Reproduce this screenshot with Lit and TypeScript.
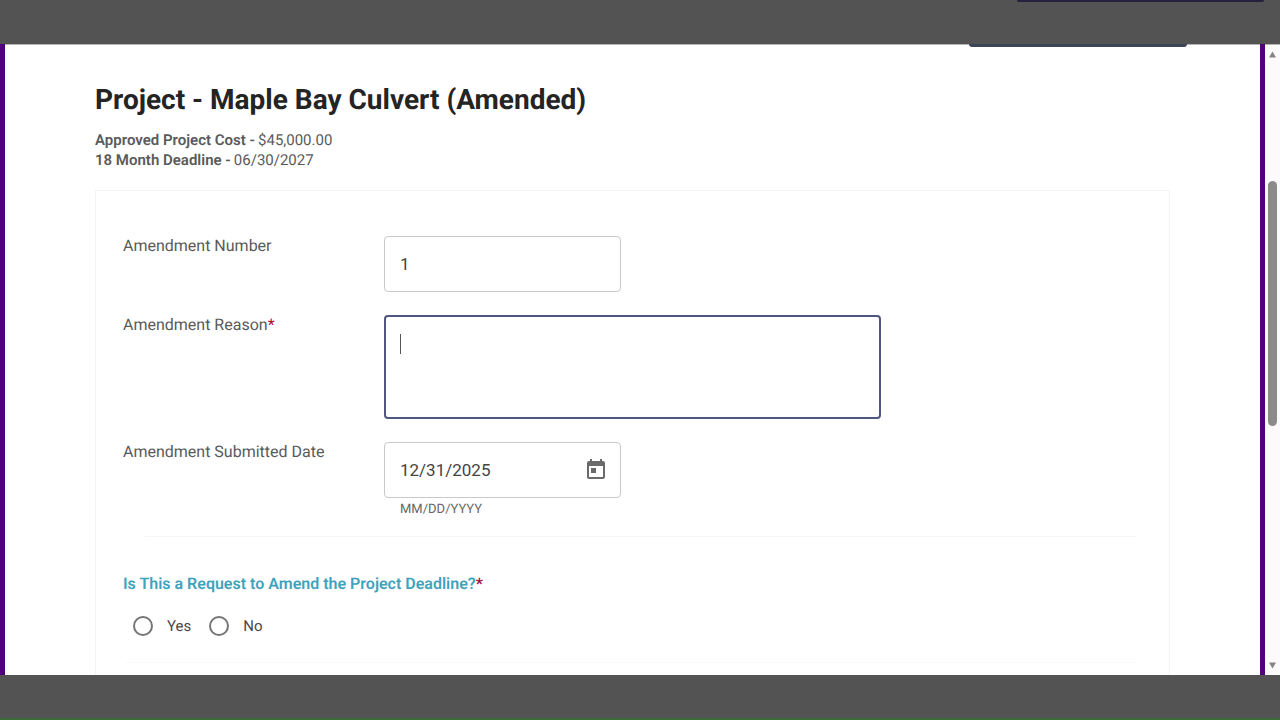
import { LitElement, html, css } from "lit";
import { customElement, state } from "lit/decorators.js";

@customElement("app-root")
export class AppRoot extends LitElement {
  @state() private reason = "";

  static styles = css`
    :host {
      display: flex;
      flex-direction: column;
      height: 100vh;
      overflow: hidden;
      font-family: Roboto, "Noto Sans", sans-serif;
      font-size: 16px;
      text-rendering: geometricPrecision;
      color: #5a5a5a;
      background: #fff;
    }
    * {
      box-sizing: border-box;
    }
    .top {
      flex: none;
      height: 44px;
      padding: 0 16px;
      display: flex;
      justify-content: flex-end;
      background: #535353;
    }
    .top-edge {
      width: 247px;
      height: 2px;
      border-radius: 0 0 2px 2px;
      background: #25213f;
    }
    .bottom {
      flex: none;
      height: 45px;
      background: #535353;
      border-bottom: 2px solid #3a6c35;
    }
    .middle {
      flex: 1;
      min-height: 0;
      display: flex;
    }
    .page {
      flex: 1;
      min-width: 0;
      overflow: hidden;
      border: 0 solid #50007c;
      border-width: 0 5px;
      box-shadow: inset 0 1px #b4b4b4;
      padding: 0 90px;
      display: flex;
      flex-direction: column;
    }
    .page-edge {
      flex: none;
      align-self: flex-end;
      width: 218px;
      height: 3px;
      margin-right: -17px;
      border-radius: 0 0 3px 3px;
      background: #3b4557;
    }
    h1 {
      margin: 35px 0 0;
      font-size: 28px;
      line-height: 36px;
      font-weight: 700;
      color: #242424;
    }
    .facts {
      margin: 12px 0 0;
      font-size: 15px;
      line-height: 20px;
    }
    .facts div {
      display: flex;
      gap: 3px;
    }
    dt {
      font-weight: 600;
    }
    dd {
      margin: 0;
    }
    .card {
      flex: none;
      margin-top: 20px;
      padding: 45px 27px 60px;
      border: 1px solid #f4f4f4;
    }
    .rows {
      display: grid;
      gap: 23px;
      margin-bottom: 18px;
    }
    .row {
      display: grid;
      grid-template-columns: 261px minmax(0, 1fr);
    }
    .row > label {
      line-height: 20px;
    }
    .req {
      color: #a8123a;
    }
    .box {
      display: flex;
      align-items: center;
      width: 237px;
      height: 56px;
      border: 1px solid #c9c9c9;
      border-radius: 4px;
      background: #fff;
    }
    .box input {
      flex: 1;
      min-width: 0;
      height: 100%;
      padding: 0 15px;
      border: 0;
      outline: 0;
      background: none;
      font: inherit;
      font-size: 17px;
      color: #444;
    }
    .area {
      position: relative;
      width: 497px;
      max-width: 100%;
      height: 104px;
    }
    textarea {
      display: block;
      width: 100%;
      height: 100%;
      padding: 16px 14px;
      border: 2px solid #4f5680;
      border-radius: 4px;
      outline: 0;
      resize: none;
      font: inherit;
      line-height: 24px;
      color: #444;
      caret-color: transparent;
    }
    .caret {
      position: absolute;
      left: 16px;
      top: 19px;
      width: 1px;
      height: 20px;
      background: #555;
      pointer-events: none;
    }
    .cal {
      flex: none;
      width: 48px;
      height: 48px;
      padding: 12px;
      border: 0;
      background: none;
      color: #6a6a6a;
    }
    .cal svg {
      display: block;
      width: 24px;
      height: 24px;
    }
    .hint {
      margin: 4px 0 0 16px;
      font-size: 13px;
      line-height: 16px;
      color: #666;
    }
    hr {
      margin: 0 6px 0 22px;
      border: 0;
      border-top: 1px solid #f5f5f5;
    }
    .faint {
      margin-left: 2px;
      border-color: #fafafa;
    }
    fieldset {
      margin: 37px 0 0;
      padding: 0;
      border: 0;
    }
    legend {
      padding: 0;
      font-size: 16px;
      line-height: 20px;
      font-weight: 600;
      color: #3fa3bb;
    }
    .choices {
      display: flex;
      gap: 18px;
      padding: 22px 10px 26px;
    }
    .choice {
      display: flex;
      align-items: center;
      gap: 14px;
      font-size: 15px;
      line-height: 20px;
      color: #484848;
    }
    .choice input {
      appearance: none;
      width: 20px;
      height: 20px;
      margin: 0;
      border: 2px solid #757575;
      border-radius: 50%;
    }
    .choice input:checked {
      background: #4f5680;
      box-shadow: inset 0 0 0 3px #fff;
    }
    .scroll {
      flex: none;
      width: 15px;
      padding: 7px 3px 6px 3px;
      display: flex;
      flex-direction: column;
      background: #fcfafc;
      box-shadow: inset 0 1px #b4b4b4;
    }
    .scroll svg {
      flex: none;
      display: block;
      width: 9px;
      height: 7px;
    }
    .track {
      flex: 1;
      padding-top: 123px;
    }
    .thumb {
      height: 51%;
      width: 9px;
      border-radius: 5px;
      background: #8b8b8b;
    }
  `;

  private onReason(e: Event) {
    this.reason = (e.target as HTMLTextAreaElement).value;
  }

  render() {
    return html`
      <div class="top"><div class="top-edge"></div></div>
      <div class="middle">
        <main class="page">
          <div class="page-edge"></div>
          <h1>Project - Maple Bay Culvert (Amended)</h1>
          <dl class="facts">
            <div><dt>Approved Project Cost -</dt><dd>$45,000.00</dd></div>
            <div><dt>18 Month Deadline -</dt><dd>06/30/2027</dd></div>
          </dl>
          <form class="card">
            <div class="rows">
              <div class="row">
                <label for="number">Amendment Number</label>
                <div class="box"><input id="number" type="text" value="1" /></div>
              </div>
              <div class="row">
                <label for="reason">Amendment Reason<span class="req">*</span></label>
                <div class="area">
                  <textarea id="reason" required .value=${this.reason} @input=${this.onReason}></textarea>
                  ${this.reason ? "" : html`<span class="caret"></span>`}
                </div>
              </div>
              <div class="row">
                <label for="date">Amendment Submitted Date</label>
                <div>
                  <div class="box">
                    <input id="date" type="text" value="12/31/2025" aria-describedby="date-hint" />
                    <button class="cal" type="button" aria-label="Open calendar">
                      <svg viewBox="0 0 24 24" fill="currentColor" aria-hidden="true">
                        <path
                          d="M19 3h-1V1h-2v2H8V1H6v2H5c-1.110 0-1.990.9-1.990 2L3 19c0 1.100.89 2 2 2h14c1.100 0 2-.9 2-2V5c0-1.100-.9-2-2-2zm0 16H5V8h14v11zM7 10h5v5H7z"
                        />
                      </svg>
                    </button>
                  </div>
                  <p class="hint" id="date-hint">MM/DD/YYYY</p>
                </div>
              </div>
            </div>
            <hr />
            <fieldset>
              <legend>Is This a Request to Amend the Project Deadline?<span class="req">*</span></legend>
              <div class="choices">
                <label class="choice"><input type="radio" name="amend" value="yes" />Yes</label>
                <label class="choice"><input type="radio" name="amend" value="no" />No</label>
              </div>
            </fieldset>
            <hr class="faint" />
          </form>
        </main>
        <div class="scroll" aria-hidden="true">
          <svg viewBox="0 0 9 7"><path d="M4.500 0.500L8 6.500H1z" fill="#858585" /></svg>
          <div class="track"><div class="thumb"></div></div>
          <svg viewBox="0 0 9 7"><path d="M4.500 6.500L8 0.500H1z" fill="#858585" /></svg>
        </div>
      </div>
      <div class="bottom"></div>
    `;
  }
}
